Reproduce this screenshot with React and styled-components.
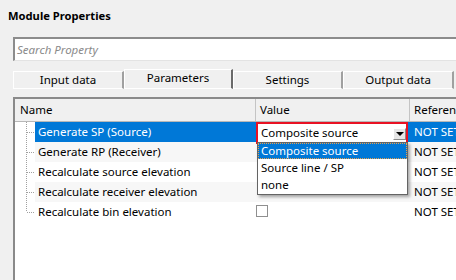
import React from "react";
import styled, { createGlobalStyle } from "styled-components";

const Global = createGlobalStyle`
  html, body { margin: 0; padding: 0; background: #f0f0f0; }
  body { font-family: "Noto Sans", "Liberation Sans", sans-serif; font-size: 11.5px; color: #000; }
`;

const Window = styled.div`
  width: 456px;
  height: 280px;
  overflow: hidden;
  background: #f0f0f0;
`;

const Title = styled.div`
  padding: 8px 0 13px 8px;
  line-height: 16px;
  font-weight: bold;
  font-size: 11.2px;
`;

const Content = styled.div`
  padding-left: 13px;
  width: 460px;
`;

const SearchBox = styled.div`
  height: 21px;
  background: #fff;
  border-top: 2px solid #8c8c8c;
  border-left: 2px solid #8c8c8c;
  border-bottom: 1px solid #e3e3e3;
  display: flex;
  align-items: center;
  padding-left: 2px;
`;

const Placeholder = styled.span`
  font-style: italic;
  color: #8a8a8a;
`;

const TabBar = styled.div`
  margin-top: 7px;
  height: 21px;
  display: flex;
  align-items: flex-end;
`;

const Tab = styled.div`
  width: ${(p) => p.$w}px;
  height: ${(p) => (p.$active ? 20 : 18)}px;
  box-sizing: border-box;
  border-top: 1px solid #fff;
  border-left: 1px solid #fff;
  border-right: 2px solid ${(p) => (p.$active ? "#6a6a6a" : "#a0a0a0")};
  border-bottom: 1px solid #fff;
  display: flex;
  align-items: center;
  justify-content: center;
  padding-bottom: ${(p) => (p.$active ? 2 : 0)}px;
  line-height: 14px;
`;

const Grid = styled.div`
  margin-top: 8px;
  border-top: 2px solid #8a8a8a;
  border-left: 2px solid #8a8a8a;
  background: #fff;
  height: 200px;
`;

const HeaderRow = styled.div`
  display: flex;
  height: 22px;
  border-bottom: 1px solid #b8b8b8;
  background: #f0f0f0;
`;

const HeaderCell = styled.div`
  width: ${(p) => p.$w}px;
  flex: none;
  box-sizing: border-box;
  padding-left: ${(p) => p.$pad}px;
  border-right: 1px solid #c4c4c4;
  display: flex;
  align-items: center;
  line-height: 14px;
  white-space: nowrap;
  overflow: hidden;
`;

const Row = styled.div`
  display: flex;
  height: 20px;
`;

const Gutter = styled.div`
  width: 20px;
  flex: none;
  background: #fff;
`;

const Cells = styled.div`
  display: flex;
  flex: 1;
  background: ${(p) => (p.$selected ? "#0078d7" : p.$alt ? "#f7f7f7" : "#fff")};
  color: ${(p) => (p.$selected ? "#fff" : "#000")};
`;

const Cell = styled.div`
  width: ${(p) => p.$w}px;
  flex: none;
  box-sizing: border-box;
  padding-left: ${(p) => p.$pad}px;
  display: flex;
  align-items: center;
  line-height: 14px;
  white-space: nowrap;
  position: relative;
`;

const Combo = styled.div`
  position: relative;
  align-self: flex-start;
  width: 152px;
  height: 22px;
  box-sizing: border-box;
  border: 2px solid #e81123;
  background: #fff;
  color: #000;
  display: flex;
  align-items: center;
  padding-left: 3px;
  z-index: 2;
`;

const ComboText = styled.span`
  flex: 1;
  line-height: 14px;
`;

const DropButton = styled.div`
  width: 13px;
  height: 12px;
  box-sizing: border-box;
  margin-top: 2px;
  border-top: 1px solid #fff;
  border-left: 1px solid #fff;
  border-right: 1px solid #8a8a8a;
  border-bottom: 1px solid #8a8a8a;
  background: #e6e6e6;
  display: flex;
  align-items: center;
  justify-content: center;
`;

const Arrow = styled.div`
  width: 0;
  height: 0;
  border-left: 4px solid transparent;
  border-right: 4px solid transparent;
  border-top: 4px solid #000;
`;

const DropList = styled.div`
  position: absolute;
  top: 100%;
  left: -1px;
  width: 151px;
  box-sizing: border-box;
  border: 1px solid #646464;
  background: #fff;
  box-shadow: 2px 2px 3px rgba(0, 0, 0, 0.35);
`;

const DropItem = styled.div`
  height: 16px;
  margin-bottom: 1px;
  padding-left: 3px;
  display: flex;
  align-items: center;
  line-height: 14px;
  background: ${(p) => (p.$active ? "#0078d7" : "#fff")};
  color: ${(p) => (p.$active ? "#fff" : "#000")};
  outline: ${(p) => (p.$active ? "1px dotted #e8a04c" : "none")};
  outline-offset: -1px;
`;

const CheckBox = styled.div`
  width: 12px;
  height: 12px;
  box-sizing: border-box;
  border: 1px solid #8f8f8f;
  background: #fff;
  margin-bottom: 2px;
`;

function TreeLine({ last }) {
  return (
    <svg width="20" height="20" style={{ display: "block" }}>
      <line
        x1="11.5"
        y1="0"
        x2="11.5"
        y2={last ? 10 : 20}
        stroke="#a0a0a0"
        strokeDasharray="1 1"
      />
      <line x1="12" y1="10.5" x2="20" y2="10.5" stroke="#a0a0a0" strokeDasharray="1 1" />
    </svg>
  );
}

const rows = [
  { name: "Generate SP (Source)", kind: "combo" },
  { name: "Generate RP (Receiver)" },
  { name: "Recalculate source elevation" },
  { name: "Recalculate receiver elevation" },
  { name: "Recalculate bin elevation", kind: "check" },
];

export default function App() {
  return (
    <Window>
      <Global />
      <Title>Module Properties</Title>
      <Content>
        <SearchBox>
          <Placeholder>Search Property</Placeholder>
        </SearchBox>
        <TabBar>
          <Tab $w={111}>Input data</Tab>
          <Tab $w={109} $active>Parameters</Tab>
          <Tab $w={110}>Settings</Tab>
          <Tab $w={111}>Output data</Tab>
        </TabBar>
        <Grid>
          <HeaderRow>
            <HeaderCell $w={241} $pad={5}>Name</HeaderCell>
            <HeaderCell $w={154} $pad={4}>Value</HeaderCell>
            <HeaderCell $w={60} $pad={4}>Reference</HeaderCell>
          </HeaderRow>
          {rows.map((r, i) => (
            <Row key={r.name}>
              <Gutter>
                <TreeLine last={i === rows.length - 1} />
              </Gutter>
              <Cells $selected={i === 0} $alt={i % 2 === 1}>
                <Cell $w={221} $pad={3}>{r.name}</Cell>
                <Cell $w={154} $pad={0}>
                  {r.kind === "combo" && (
                    <Combo>
                      <ComboText>Composite source</ComboText>
                      <DropButton>
                        <Arrow />
                      </DropButton>
                      <DropList>
                        <DropItem $active>Composite source</DropItem>
                        <DropItem>Source line / SP</DropItem>
                        <DropItem>none</DropItem>
                      </DropList>
                    </Combo>
                  )}
                  {r.kind === "check" && <CheckBox />}
                </Cell>
                <Cell $w={60} $pad={4}>NOT SET</Cell>
              </Cells>
            </Row>
          ))}
        </Grid>
      </Content>
    </Window>
  );
}
